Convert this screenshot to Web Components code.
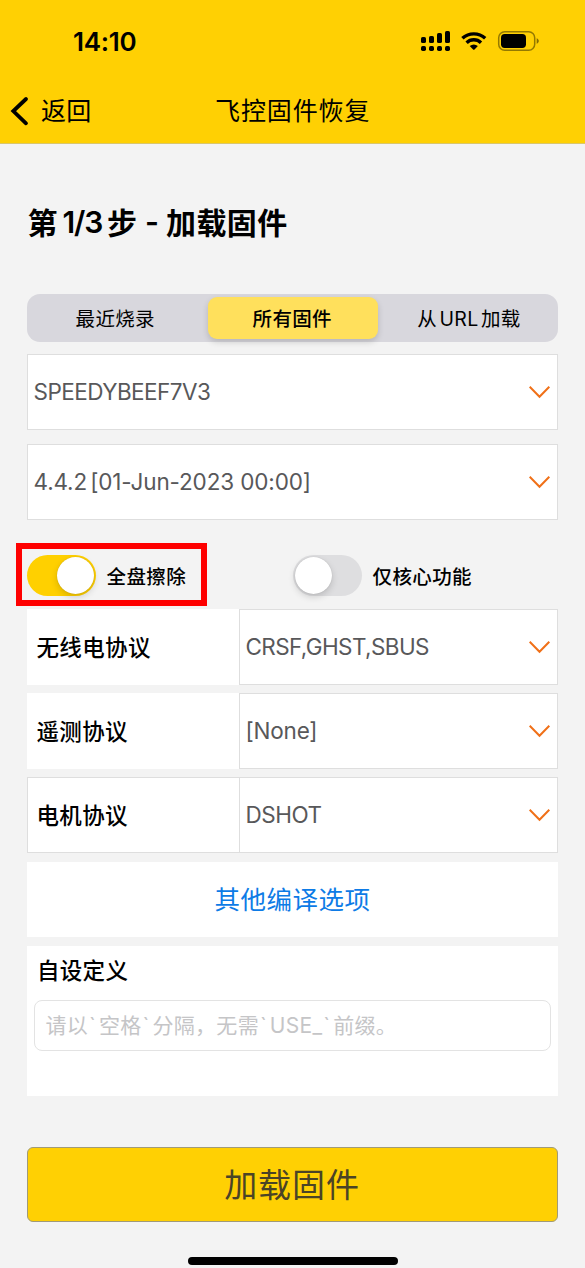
<!DOCTYPE html>
<html lang="zh-CN">
<head>
<meta charset="utf-8">
<title>飞控固件恢复</title>
<style>
html,body{margin:0;padding:0;background:#f3f3f3}
body{font-family:Inter,"Noto Sans CJK SC",sans-serif;color:#000;width:585px;height:1268px;overflow:hidden}
</style>
</head>
<body>
<firmware-app></firmware-app>
<script>
const define = (name, html) => customElements.define(name, class extends HTMLElement {
  constructor() {
    super();
    const t = document.createElement('template');
    t.innerHTML = html;
    this.attachShadow({ mode: 'open' }).append(t.content.cloneNode(true));
  }
});

define('status-bar', `
<style>
:host{display:flex;height:78px;box-sizing:border-box;padding:3px 45px 0 73px;align-items:center;justify-content:space-between}
.time{font-size:26px;font-weight:600;letter-spacing:-.25px;line-height:32px;padding-top:2px}
svg{display:block}
</style>
<span class="time">14:10</span>
<svg width="120" height="24" viewBox="0 0 120 24">
  <g>
    <rect x="1" y="8" width="5" height="6" rx="1.6"/><rect x="9" y="7" width="5" height="7" rx="1.6"/>
    <rect x="17" y="4" width="5" height="10" rx="1.6"/><rect x="25" y="2" width="5" height="12" rx="1.6"/>
    <rect x="1" y="17" width="5" height="5" rx="1.7"/><rect x="9" y="17" width="5" height="5" rx="1.7"/>
    <rect x="17" y="17" width="5" height="5" rx="1.7"/><rect x="25" y="17" width="5" height="5" rx="1.7"/>
  </g>
  <g fill="none" stroke="#000" stroke-width="3.4">
    <path d="M42.400 9.300A16.800 16.800 0 0 1 65.200 9.300"/>
    <path d="M46.600 13.700A10.400 10.400 0 0 1 61 13.700"/>
  </g>
  <path d="M49.700 17.100Q53.800 13.800 57.900 17.100L54.500 20.500Q53.800 21.100 53.100 20.500Z"/>
  <rect x="78.700" y="2.700" width="36" height="18.500" rx="6" fill="none" stroke="#000" stroke-opacity=".42" stroke-width="1.500"/>
  <rect x="81" y="5" width="25" height="14" rx="3.700"/>
  <path d="M116.700 9.300C119.500 10.300 119.500 13.700 116.700 14.700Z" fill-opacity=".48"/>
</svg>`);

define('nav-bar', `
<style>
:host{display:grid;grid-template-columns:215px 1fr 215px;height:66px;box-sizing:border-box;align-items:center;border-bottom:1px solid #d9c66b;font-size:25px;line-height:36px}
.back{display:flex;align-items:center;padding-left:10px;gap:12px;letter-spacing:.3px}
.back span{padding-top:1px}
svg{display:block}
.title{letter-spacing:.9px;white-space:nowrap;padding-top:1px}
</style>
<span class="back"><svg width="19" height="32" viewBox="0 0 19 32"><path d="M16 4L3.300 16L16 28.300" fill="none" stroke="#000" stroke-width="3.800" stroke-linecap="round" stroke-linejoin="miter"/></svg><span><slot name="back"></slot></span></span>
<span class="title"><slot></slot></span>`);

define('step-title', `
<style>
:host{display:flex;height:44px;align-items:center;font-size:30px;font-weight:600;white-space:nowrap}
.cjk{padding-bottom:3px}
.num{margin:0 5px 0 5px;letter-spacing:-1.200px}
.dash{margin:0 7px 0 8px}
.name{letter-spacing:.4px}
</style>
<span class="cjk">第</span><span class="num">1/3</span><span class="cjk">步</span><span class="dash">-</span><span class="cjk name">加载固件</span>`);

define('segment-item', `
<style>
:host{display:flex;align-items:center;justify-content:center;border-radius:9px;font-size:19.500px;letter-spacing:.35px;word-spacing:-3.500px;white-space:pre;padding:0 1px 2px 0}
:host(:first-child){padding-right:4px}
:host(:last-child){padding:0 0 2px 2px}
:host([active]){background:#ffe05c;font-weight:500;box-shadow:0 3px 6px rgba(0,0,0,.16)}
</style><slot></slot>`);

define('segment-control', `
<style>
:host{display:grid;grid-template-columns:174.500px 170.500px 174px;column-gap:3px;height:48px;box-sizing:border-box;padding:3px;border-radius:13px;background:#d8d7dd}
::slotted(*){box-sizing:border-box}
</style><slot></slot>`);

define('select-field', `
<style>
:host{display:flex;align-items:center;justify-content:space-between;height:76px;box-sizing:border-box;border:1px solid #dedede;background:#fff;padding:0 6px 0 5.500px;color:#58585a;font-size:22.500px;line-height:30px;white-space:pre;letter-spacing:var(--track,0)}
svg{display:block}
</style>
<span><slot></slot></span>
<svg width="22" height="14" viewBox="0 0 22 14"><path d="M.700 1.700L10.500 11.700L20.300 1.700" fill="none" stroke="#f07018" stroke-width="2"/></svg>`);

define('toggle-switch', `
<style>
:host{display:flex;align-items:center;font-size:19.500px;font-weight:500;letter-spacing:.4px}
.track{width:69px;height:41px;border-radius:21px;background:#dedee0;box-sizing:border-box;padding:2px;display:flex;margin-right:10.500px}
.knob{width:37px;height:37px;border-radius:50%;background:#fff;box-shadow:0 3px 7px rgba(0,0,0,.16),0 0 1px rgba(0,0,0,.2)}
:host([on]) .track{background:#ffd000;justify-content:flex-end}
</style>
<span class="track"><span class="knob"></span></span><span><slot></slot></span>`);

define('mark-frame', `
<style>
:host{display:block;position:relative}
i{position:absolute;left:-11px;top:-12px;width:191px;height:63px;box-sizing:border-box;border:6px solid #fe0000}
</style><slot></slot><i></i>`);

define('option-row', `
<style>
:host{display:grid;grid-template-columns:212px 1fr;height:76px}
.label{display:flex;align-items:center;background:#fff;padding:0 0 2px 8.500px;font-size:22.500px;font-weight:500;letter-spacing:.35px;border:1px solid #fff;border-right:0;box-sizing:border-box}
:host([outlined]) .label{border-color:#dedede}
</style>
<span class="label"><slot name="label"></slot></span><select-field><slot></slot></select-field>`);

define('link-card', `
<style>
:host{display:flex;align-items:center;justify-content:center;height:75px;box-sizing:border-box;padding-bottom:4px;background:#fff;color:#0d7be6;font-size:25.500px;letter-spacing:.5px}
</style><slot></slot>`);

define('custom-defines', `
<style>
:host{display:block;height:150px;box-sizing:border-box;background:#fff;padding:8px 7px 0}
.label{display:block;font-size:22.500px;font-weight:500;line-height:33px;padding-left:3px;letter-spacing:.3px}
.box{display:flex;align-items:center;height:51px;box-sizing:border-box;margin-top:13px;border:1px solid #e3e3e3;border-radius:8px;padding:0 0 3px 10.500px;color:#c5c5c7;font-size:21px;letter-spacing:.3px}
::slotted(span){white-space:nowrap}
</style>
<span class="label"><slot></slot></span>
<span class="box"><slot name="hint"></slot></span>`);

define('load-button', `
<style>
:host{display:flex;align-items:center;justify-content:center;height:75px;box-sizing:border-box;padding:0 1px 4px 0;border:1.500px solid #a09a78;border-radius:6px;background:#ffd003;color:#4b4426;font-size:33px;letter-spacing:.9px}
</style><slot></slot>`);

define('firmware-app', `
<style>
:host{display:flex;flex-direction:column;width:585px;height:1268px;background:#f3f3f3}
header{background:#ffd003;height:144px}
main{padding:0 27px;display:flex;flex-direction:column}
step-title{margin:56px 0 0 .5px}
segment-control{margin-top:50px}
.fields{display:grid;gap:14px;margin-top:12px}
.tight{word-spacing:-3px}
.switches{display:grid;grid-template-columns:266px 1fr;height:41px;margin-top:35px}
.options{display:grid;gap:8px;margin-top:13px}
link-card{margin-top:9px}
custom-defines{margin-top:9px}
custom-defines b{font-weight:400;margin:0 2.800px 0 1px}
load-button{margin-top:51px}
.home{width:210px;height:8px;border-radius:4px;background:#000;margin:35px auto 0}
</style>
<header><status-bar></status-bar><nav-bar><span slot="back">返回</span>飞控固件恢复</nav-bar></header>
<main>
  <step-title></step-title>
  <segment-control><segment-item>最近烧录</segment-item><segment-item active>所有固件</segment-item><segment-item>从 URL 加载</segment-item></segment-control>
  <div class="fields"><select-field style="--track:-.53px">SPEEDYBEEF7V3</select-field><select-field style="--track:-.14px"><span class="tight">4.4.2 </span>[01-Jun-2023 00:00]</select-field></div>
  <div class="switches"><mark-frame><toggle-switch on>全盘擦除</toggle-switch></mark-frame><toggle-switch>仅核心功能</toggle-switch></div>
  <div class="options">
    <option-row style="--track:-.6px"><span slot="label">无线电协议</span>CRSF,GHST,SBUS</option-row>
    <option-row style="--track:-.2px"><span slot="label">遥测协议</span>[None]</option-row>
    <option-row outlined style="--track:-.5px"><span slot="label">电机协议</span>DSHOT</option-row>
  </div>
  <link-card>其他编译选项</link-card>
  <custom-defines>自设定义<span slot="hint">请以<b>\`</b>空格<b>\`</b>分隔，无需<b>\`</b>USE_<b>\`</b>前缀。</span></custom-defines>
  <load-button>加载固件</load-button>
</main>
<div class="home"></div>`);
</script>
</body>
</html>
